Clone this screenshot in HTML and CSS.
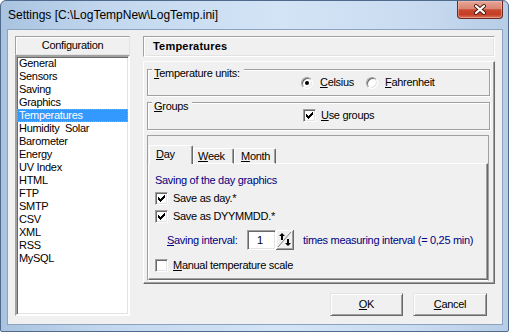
FILE: index.html
```html
<!DOCTYPE html>
<html>
<head>
<meta charset="utf-8">
<link rel="stylesheet" href="styles.css">
</head>
<body>
<div class="window">
  <div class="titlebar">
    <span class="title">Settings [C:\LogTempNew\LogTemp.ini]</span>
    <div class="close">
      <svg width="14" height="11" viewBox="0 0 14 11">
        <path d="M3 2 L11 9 M11 2 L3 9" stroke="#4a1c14" stroke-width="4" stroke-linecap="round" fill="none"/>
        <path d="M3 2 L11 9 M11 2 L3 9" stroke="#ffffff" stroke-width="2.2" stroke-linecap="round" fill="none"/>
      </svg>
    </div>
  </div>
  <div class="client">
    <div class="left">
      <div class="hdr hdr-conf">Configuration</div>
      <ul class="list">
        <li>General</li>
        <li>Sensors</li>
        <li>Saving</li>
        <li>Graphics</li>
        <li class="sel">Temperatures</li>
        <li>Humidity&nbsp; Solar</li>
        <li>Barometer</li>
        <li>Energy</li>
        <li>UV Index</li>
        <li>HTML</li>
        <li>FTP</li>
        <li>SMTP</li>
        <li>CSV</li>
        <li>XML</li>
        <li>RSS</li>
        <li>MySQL</li>
      </ul>
    </div>
    <div class="right">
      <div class="hdr hdr-page">Temperatures</div>
      <div class="panel">
        <div class="group g1">
          <span class="glabel"><u>T</u>emperature units:</span>
          <div class="radios">
            <div class="opt opt-c"><span class="radio on"></span><span><u>C</u>elsius</span></div>
            <div class="opt"><span class="radio"></span><span><u>F</u>ahrenheit</span></div>
          </div>
        </div>
        <div class="group g2">
          <span class="glabel"><u>G</u>roups</span>
          <div class="chkrow groups-row">
            <span class="chk on"><svg width="7" height="7" viewBox="0 0 7 7"><path d="M6 0h1v1h-1z M5 1h2v1h-2z M0 2h1v1h-1z M4 2h3v1h-3z M0 3h2v1h-2z M3 3h3v1h-3z M0 4h5v1h-5z M1 5h3v1h-3z M2 6h1v1h-1z" fill="#000" shape-rendering="crispEdges"/></svg></span>
            <span><u>U</u>se groups</span>
          </div>
        </div>
        <div class="tabbox">
          <div class="tabs">
            <div class="tab sel tab-day"><u>D</u>ay</div>
            <div class="tab tab-week"><u>W</u>eek</div>
            <div class="tab tab-month"><u>M</u>onth</div>
          </div>
          <div class="page">
            <div class="blue heading">Saving of the day graphics</div>
            <div class="chkrow r1">
              <span class="chk on"><svg width="7" height="7" viewBox="0 0 7 7"><path d="M6 0h1v1h-1z M5 1h2v1h-2z M0 2h1v1h-1z M4 2h3v1h-3z M0 3h2v1h-2z M3 3h3v1h-3z M0 4h5v1h-5z M1 5h3v1h-3z M2 6h1v1h-1z" fill="#000" shape-rendering="crispEdges"/></svg></span>
              <span>Save as day.*</span>
            </div>
            <div class="chkrow r2">
              <span class="chk on"><svg width="7" height="7" viewBox="0 0 7 7"><path d="M6 0h1v1h-1z M5 1h2v1h-2z M0 2h1v1h-1z M4 2h3v1h-3z M0 3h2v1h-2z M3 3h3v1h-3z M0 4h5v1h-5z M1 5h3v1h-3z M2 6h1v1h-1z" fill="#000" shape-rendering="crispEdges"/></svg></span>
              <span>Save as DYYMMDD.*</span>
            </div>
            <div class="spinrow">
              <span class="blue spinlabel"><u>S</u>aving interval:</span>
              <span class="edit">1</span>
              <span class="spin">
                <svg width="18" height="20" viewBox="0 0 18 20" shape-rendering="crispEdges">
                  <rect x="0" y="0" width="18" height="20" fill="#f0f0f0"/>
                  <rect x="0" y="0" width="17" height="1" fill="#ffffff"/>
                  <rect x="0" y="0" width="1" height="19" fill="#ffffff"/>
                  <rect x="0" y="19" width="18" height="1" fill="#696969"/>
                  <rect x="17" y="0" width="1" height="20" fill="#696969"/>
                  <rect x="1" y="18" width="16" height="1" fill="#a0a0a0"/>
                  <rect x="16" y="1" width="1" height="18" fill="#a0a0a0"/>
                  <path d="M2 17 L15 2" stroke="#808080" stroke-width="1" shape-rendering="auto"/>
                  <polygon points="6,3 9,6 7,6 7,10 5,10 5,6 3,6" fill="#000" shape-rendering="auto"/>
                  <polygon points="12,16 15,13 13,13 13,9 11,9 11,13 9,13" fill="#000" shape-rendering="auto"/>
                </svg>
              </span>
              <span class="blue spintext">times measuring interval (= 0,25 min)</span>
            </div>
            <div class="chkrow r3">
              <span class="chk"></span>
              <span><u>M</u>anual temperature scale</span>
            </div>
          </div>
        </div>
      </div>
      <div class="buttons">
        <button class="btn btn-ok"><u>O</u>K</button>
        <button class="btn btn-cancel"><u>C</u>ancel</button>
      </div>
    </div>
  </div>
</div>
</body>
</html>
```

FILE: styles.css
```css
html, body {
  margin: 0;
  padding: 0;
  background: #ffffff;
}

.window {
  width: 509px;
  height: 332px;
  box-sizing: border-box;
  border: 1px solid #4f6a8c;
  border-radius: 6px 6px 2px 2px;
  background: linear-gradient(to right, #a9c3e0 0%, #c2d7ee 20%, #d3e4f6 55%, #cadcf1 80%, #b7cde6 100%);
  display: flex;
  flex-direction: column;
  font-family: "Liberation Sans", Arial, sans-serif;
  font-size: 11px;
  letter-spacing: -0.3px;
  color: #000;
  overflow: hidden;
}

.titlebar {
  height: 28px;
  display: flex;
  justify-content: space-between;
  align-items: flex-start;
  flex: none;
}

.title {
  font-size: 12px;
  letter-spacing: 0;
  line-height: 16px;
  padding: 6px 0 0 7px;
  color: #000;
}

.close {
  width: 46px;
  height: 18px;
  margin-right: 5px;
  box-sizing: border-box;
  border: 1px solid #6b2a20;
  border-top: none;
  border-radius: 0 0 4px 4px;
  background: linear-gradient(#e6a595 0%, #d98672 45%, #c8482f 52%, #c43d24 80%, #d9785f 100%);
  box-shadow: inset 0 0 0 1px rgba(255, 200, 190, 0.45);
  display: flex;
  align-items: center;
  justify-content: center;
}

.close svg {
  display: block;
}

.client {
  height: 296px;
  margin: 0 5px 0 6px;
  box-sizing: border-box;
  border: 1px solid #8ca3bf;
  background: #f0f0f0;
  padding: 6px 0 0 7px;
  display: grid;
  grid-template-columns: 115px 352px;
  column-gap: 13px;
  align-items: start;
  flex: none;
}

/* header boxes */
.hdr {
  box-sizing: border-box;
  border: 1px solid;
  border-color: #a0a0a0 #ffffff #ffffff #a0a0a0;
  box-shadow: inset 1px 1px #ffffff, 1px 1px #a0a0a0 inset;
  background: #f0f0f0;
}

.hdr-conf {
  height: 19px;
  line-height: 17px;
  text-align: center;
  border-color: #a0a0a0 #e3e3e3 #e3e3e3 #a0a0a0;
  box-shadow: inset 1px 1px #ffffff;
}

.hdr-page {
  height: 21px;
  line-height: 19px;
  padding-left: 9px;
  font-weight: bold;
  letter-spacing: 0.2px;
  border-color: #a0a0a0 #ffffff #ffffff #a0a0a0;
  box-shadow: inset 1px 1px #ffffff, inset -1px -1px #e3e3e3;
}

/* list box */
.list {
  list-style: none;
  margin: 0;
  padding: 0;
  height: 261px;
  box-sizing: border-box;
  background: #ffffff;
  border: 2px solid;
  border-color: #a0a0a0 #ffffff #ffffff #a0a0a0;
  box-shadow: inset 1px 1px #696969, inset -1px -1px #e3e3e3;
  overflow: hidden;
}

.list li {
  height: 13px;
  line-height: 13px;
  padding-left: 1px;
  border: 1px solid transparent;
  border-top: none;
  border-bottom: none;
  white-space: nowrap;
}

.list li:first-child {
  margin-top: 0;
}

.list li.sel {
  background: #3399ff;
  color: #ffffff;
  outline: 1px dotted #d89a5a;
  outline-offset: -1px;
}

/* right page */
.panel {
  margin-top: 4px;
  height: 223px;
  box-sizing: border-box;
  border: 1px solid;
  border-color: #ffffff #696969 #696969 #ffffff;
  box-shadow: inset -1px -1px #a0a0a0;
  padding: 7px 0 0 3px;
}

.group {
  position: relative;
  width: 343px;
  box-sizing: border-box;
  border: 1px solid #a0a0a0;
  box-shadow: inset 1px 1px #ffffff, 1px 1px #ffffff;
}

.glabel {
  position: absolute;
  left: 4px;
  top: -3px;
  line-height: 13px;
  padding: 0 4px 0 2px;
  background: #f0f0f0;
}

.g1 {
  height: 27px;
  padding: 6px 0 0 153px;
}

.g2 {
  margin-top: 6px;
  height: 28px;
  padding: 6px 0 0 155px;
}

.radios {
  display: flex;
  align-items: center;
  height: 13px;
}

.opt {
  display: flex;
  align-items: center;
  gap: 7px;
  line-height: 13px;
}

.opt-c {
  width: 65px;
}

.radio {
  width: 12px;
  height: 12px;
  box-sizing: border-box;
  border-radius: 50%;
  border: 1px solid;
  border-color: #a0a0a0 #ffffff #ffffff #a0a0a0;
  background: #ffffff;
  box-shadow: inset 1px 1px #696969, inset -1px -1px #e3e3e3;
  position: relative;
  flex: none;
}

.radio.on::after {
  content: "";
  position: absolute;
  left: 3px;
  top: 3px;
  width: 4px;
  height: 4px;
  border-radius: 50%;
  background: #000;
}

.chkrow {
  display: flex;
  align-items: center;
  gap: 5px;
  height: 13px;
  line-height: 13px;
}

.chk {
  width: 13px;
  height: 13px;
  box-sizing: border-box;
  border: 1px solid;
  border-color: #a0a0a0 #ffffff #ffffff #a0a0a0;
  background: #ffffff;
  box-shadow: inset 1px 1px #696969, inset -1px -1px #e3e3e3;
  flex: none;
  padding: 2px 0 0 2px;
}

.chk svg {
  display: block;
}

/* tabs */
.tabbox {
  margin-top: 5px;
  width: 342px;
  height: 146px;
  box-sizing: border-box;
  border: 1px solid;
  border-color: #a0a0a0 #a0a0a0 #ffffff #a0a0a0;
  padding-top: 9px;
}

.tabs {
  display: flex;
  align-items: flex-end;
  height: 19px;
  margin-left: 1px;
  margin-bottom: -1px;
  position: relative;
  z-index: 1;
}

.tab {
  box-sizing: border-box;
  height: 16px;
  line-height: 15px;
  border-top: 1px solid #ffffff;
  border-left: 1px solid #ffffff;
  border-right: 1px solid #696969;
  box-shadow: inset -1px 0 #a0a0a0;
  border-radius: 2px 2px 0 0;
  background: #f0f0f0;
  white-space: nowrap;
}

.tab.sel {
  height: 19px;
  line-height: 17px;
}

.tab-day {
  width: 44px;
  padding-left: 6px;
}

.tab-week {
  width: 41px;
  padding-left: 4px;
  border-bottom: 1px solid #ffffff;
}

.tab-month {
  width: 42px;
  padding-left: 6px;
  border-bottom: 1px solid #ffffff;
}

.page {
  height: 117px;
  box-sizing: border-box;
  border: 1px solid;
  border-color: #ffffff #696969 #696969 #ffffff;
  box-shadow: inset -1px -1px #a0a0a0;
  padding: 10px 0 0 6px;
}

.blue {
  color: #000080;
}

.heading {
  line-height: 13px;
  height: 13px;
}

.r1 {
  margin-top: 5px;
}

.r2 {
  margin-top: 5px;
}

.spinrow {
  margin-top: 7px;
  display: flex;
  align-items: center;
  height: 20px;
  line-height: 13px;
}

.spinlabel {
  width: 80px;
  margin-left: 12px;
  flex: none;
}

.edit {
  width: 29px;
  height: 20px;
  box-sizing: border-box;
  border: 1px solid;
  border-color: #a0a0a0 #ffffff #ffffff #a0a0a0;
  background: #ffffff;
  box-shadow: inset 1px 1px #696969, inset -1px -1px #e3e3e3;
  padding-left: 9px;
  line-height: 18px;
  flex: none;
}

.spin {
  width: 18px;
  height: 20px;
  flex: none;
}

.spin svg {
  display: block;
}

.spintext {
  margin-left: 9px;
}

.r3 {
  margin-top: 9px;
}

/* buttons */
.buttons {
  display: flex;
  justify-content: flex-end;
  gap: 10px;
  margin-top: 9px;
  padding-right: 8px;
}

.btn {
  height: 23px;
  box-sizing: border-box;
  font-family: "Liberation Sans", Arial, sans-serif;
  font-size: 11px;
  letter-spacing: -0.3px;
  color: #000;
  background: #f0f0f0;
  border: 1px solid;
  border-color: #e3e3e3 #696969 #696969 #e3e3e3;
  box-shadow: inset 1px 1px #ffffff, inset -1px -1px #a0a0a0;
  padding: 0;
  margin: 0;
  line-height: 19px;
}

.btn-ok {
  width: 73px;
}

.btn-cancel {
  width: 74px;
}
```
